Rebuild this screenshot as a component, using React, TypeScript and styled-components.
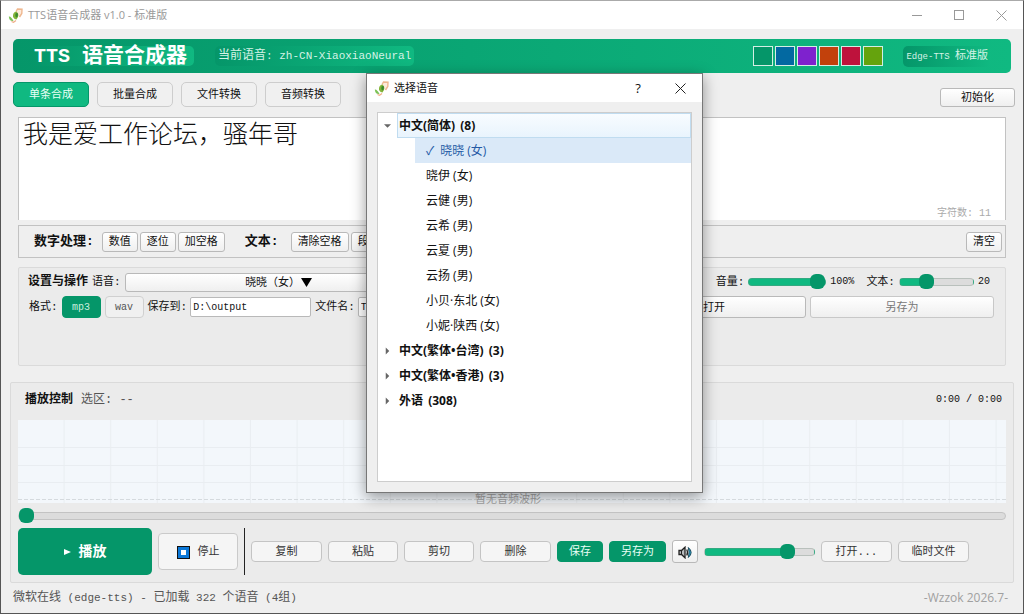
import React, { useState } from "react";
import styled, { createGlobalStyle, css } from "styled-components";

const ui = `"Liberation Mono", "Noto Sans CJK SC", monospace`;
const sans = `"Open Sans", "Noto Sans CJK SC", sans-serif`;
const green = "#059669";
const mint = "#10b981";

const GlobalStyle = createGlobalStyle`
  *, *::before, *::after { box-sizing: border-box; }
  body { margin: 0; background: #efefef; font-family: ${ui}; font-size: 11px; line-height: 16px; color: #111; }
  button, input, textarea { font: inherit; color: inherit; margin: 0; padding: 0; }
  button { padding-top: 1px; }
  ul { list-style: none; margin: 0; padding: 0; }
`;

const Window = styled.div`
  position: relative;
  display: flex;
  flex-direction: column;
  min-height: 100vh;
  overflow: hidden;
  background: #efefef;
  border: 1px solid #555;
  border-top-color: #aaa;
`;

const TitleBar = styled.header`
  display: flex;
  align-items: center;
  gap: 5px;
  height: 28px;
  padding-left: 7px;
  background: #fff;
  color: #999;
  font-family: ${sans};
`;

const TitleText = styled.span`
  flex: 1;
`;

const CaptionGroup = styled.div`
  display: flex;
  padding-right: 1px;
`;

const CaptionButton = styled.button`
  display: grid;
  place-items: center;
  width: 42px;
  height: 28px;
  padding: 0;
  border: 0;
  background: none;
  font-size: 13px;
`;

const Banner = styled.section`
  display: flex;
  align-items: center;
  height: 34px;
  margin: 10px 12px 0;
  padding: 0 20px 0 16px;
  border-radius: 5px;
  background: linear-gradient(90deg, ${green}, ${mint});
  color: #fff;
`;

const BannerLabel = styled.span`
  padding: 1px 3px 0;
  border-radius: 5px;
  background: linear-gradient(90deg, ${green}, ${mint});
  font-size: 12px;
  line-height: 19px;
  color: #d5f3e6;
  white-space: nowrap;
`;

const BannerTitle = styled.h1`
  margin: 0 21px 0 0;
  padding: 2px 7px 0 5px;
  border-radius: 5px;
  background: linear-gradient(90deg, ${green}, ${mint});
  font-size: 21px;
  line-height: 18px;
  font-weight: 700;
  white-space: nowrap;
`;

const Latin = styled.span<{ $size?: number }>`
  font-size: ${(p) => p.$size ?? 10}px;
`;

const Swatches = styled.div`
  display: flex;
  gap: 2px;
  margin: 0 20px 0 auto;
`;

const Swatch = styled.button<{ $color: string }>`
  width: 20px;
  height: 20px;
  border: 1px solid #d4eee4;
  background: ${(p) => p.$color};
`;

const TabRow = styled.nav`
  display: flex;
  align-items: flex-end;
  gap: 8px;
  margin: 9px 8px 0 12px;
`;

const Tab = styled.button<{ $active?: boolean }>`
  width: 76px;
  height: 25px;
  border: 1px solid ${(p) => (p.$active ? green : "#cdcdcd")};
  border-radius: 5px;
  background: ${(p) => (p.$active ? mint : "#f0f0f0")};
  color: ${(p) => (p.$active ? "#e9fff6" : "#111")};
`;

const raised = css`
  border: 1px solid #b9b9b9;
  border-radius: 3px;
  background: linear-gradient(#fff, #efefef);
`;

const PushButton = styled.button`
  ${raised}
  height: 20px;
  padding: 1px 6px 0;
  line-height: 16px;
  white-space: nowrap;
  &:disabled { color: #777; border-color: #c8c8c8; }
`;

const InitButton = styled(PushButton)`
  height: 19px;
  width: 75px;
  margin-left: auto;
`;

const Editor = styled.section`
  display: flex;
  flex: 1;
  flex-direction: column;
  min-height: 103px;
  margin: 10px 17px 0;
  border: 1px solid #c2c2c2;
  border-bottom: 0;
  background: #fff;
`;

const TextArea = styled.textarea`
  flex: 1;
  width: 100%;
  padding: 2px 4px;
  border: 0;
  outline: 0;
  resize: none;
  background: transparent;
  font-size: 25px;
  font-weight: 300;
  line-height: 34px;
`;

const Counter = styled.div`
  padding-right: 14px;
  text-align: right;
  font-size: 10px;
  line-height: 12px;
  color: #aaa;
`;

const ToolStrip = styled.section`
  display: flex;
  align-items: center;
  gap: 2px;
  height: 33px;
  margin: 5px 17px 0;
  padding: 0 3px 0 15px;
  border: 1px solid #c2c2c2;
`;

const StripLabel = styled.strong<{ $lead?: number; $trail: number }>`
  margin: 0 ${(p) => p.$trail}px 0 ${(p) => p.$lead ?? 0}px;
  font-size: 13px;
`;

const Spacer = styled.span`
  flex: 1;
`;

const Settings = styled.section`
  display: flex;
  flex-direction: column;
  gap: 5px;
  height: 99px;
  margin: 9px 17px 0;
  padding: 4px 11px 0 9px;
  border: 1px solid #dadada;
  border-radius: 2px;
  background: #ebebeb;
`;

const SettingsRow = styled.div<{ $end?: number }>`
  display: flex;
  align-items: center;
  gap: 4px;
  height: 20px;
  padding-right: ${(p) => p.$end ?? 0}px;
  white-space: nowrap;
`;

const SectionTitle = styled.h2`
  margin: 0;
  font-size: 12px;
  font-weight: 700;
`;

const VoiceButton = styled(PushButton)`
  display: flex;
  align-items: center;
  justify-content: center;
  gap: 1px;
  width: 308px;
  height: 19px;
`;

const FieldLabel = styled.label<{ $lead?: number }>`
  display: flex;
  align-items: center;
  gap: 3px;
  margin-left: ${(p) => p.$lead ?? 0}px;
`;

const FormatButton = styled.button<{ $active?: boolean }>`
  width: 39px;
  height: 22px;
  border: 1px solid ${(p) => (p.$active ? green : "#d0d0d0")};
  border-radius: 4px;
  background: ${(p) => (p.$active ? green : "#f0f0f0")};
  color: ${(p) => (p.$active ? "#c9efdf" : "#555")};
  font-size: 10px;
`;

const TextInput = styled.input<{ $width?: number }>`
  width: ${(p) => (p.$width ? `${p.$width}px` : "100%")};
  height: 20px;
  padding: 0 2px;
  border: 1px solid #b9b9b9;
  border-radius: 2px;
  background: #fff;
  font-size: 10px;
`;

const GrowLabel = styled(FieldLabel)`
  flex: 1;
`;

const WideButton = styled(PushButton)`
  flex: 0 1 184px;
  height: 22px;
`;

const Range = styled.input<{ $fill: number; $width?: number; $plain?: boolean }>`
  appearance: none;
  display: block;
  width: ${(p) => (p.$width ? `${p.$width}px` : "100%")};
  height: 15px;
  background: transparent;
  &::-webkit-slider-runnable-track {
    height: 8px;
    border: 1px solid ${(p) => (p.$plain ? "#c3c3c3" : "rgba(120, 140, 130, 0.35)")};
    border-radius: 4px;
    background: linear-gradient(90deg, ${mint} ${(p) => p.$fill}%, #dcdcdc ${(p) => p.$fill}%);
  }
  &::-webkit-slider-thumb {
    appearance: none;
    width: 15px;
    height: 15px;
    margin-top: -5px;
    border-radius: 6px;
    background: ${green};
  }
`;

const Player = styled.section`
  height: 201px;
  margin: 16px 9px 0;
  padding: 0 7px;
  border: 1px solid #dadada;
  border-radius: 2px;
  background: #ebebeb;
`;

const PlayerHead = styled.div`
  display: flex;
  align-items: center;
  gap: 8px;
  height: 37px;
  padding: 0 4px 3px 7px;
`;

const Selection = styled.span`
  flex: 1;
  font-size: 12px;
  color: #555;
`;

const Wave = styled.div`
  position: relative;
  display: flex;
  align-items: flex-end;
  justify-content: center;
  height: 83px;
  padding-right: 8px;
  background: #f3f7fb;
  color: #a6a6a6;
  line-height: 6px;
`;

const WaveGrid = styled.svg`
  position: absolute;
  inset: 0;
  width: 100%;
  height: 100%;
`;

const WaveText = styled.span`
  position: relative;
`;

const Seek = styled.div`
  margin: 5px 0;
`;

const Controls = styled.div`
  display: flex;
  align-items: center;
  gap: 6px;
  height: 47px;
`;

const PlayButton = styled.button`
  display: flex;
  align-items: center;
  justify-content: center;
  gap: 8px;
  width: 134px;
  height: 47px;
  border: 0;
  border-radius: 5px;
  background: ${green};
  color: #fff;
  font-size: 14px;
  font-weight: 700;
`;

const StopButton = styled.button`
  display: flex;
  align-items: center;
  justify-content: center;
  gap: 8px;
  width: 80px;
  height: 37px;
  border: 1px solid #cacaca;
  border-radius: 4px;
  background: #f5f5f5;
  color: #333;
`;

const Divider = styled.span`
  width: 1px;
  height: 47px;
  background: #222;
`;

const ActionButton = styled.button<{ $primary?: boolean; $width?: number }>`
  width: ${(p) => p.$width ?? 70}px;
  height: 21px;
  border: 1px solid ${(p) => (p.$primary ? green : "#c4c4c4")};
  border-radius: 4px;
  background: ${(p) => (p.$primary ? green : "#f5f5f5")};
  color: ${(p) => (p.$primary ? "#e9fff6" : "#333")};
  line-height: 16px;
`;

const MuteButton = styled.button`
  ${raised}
  display: grid;
  place-items: center;
  width: 26px;
  height: 23px;
`;

const StatusBar = styled.footer`
  display: flex;
  align-items: center;
  justify-content: space-between;
  height: 30px;
  padding: 0 15px 0 12px;
  font-size: 12px;
  color: #555;
`;

const Signature = styled.span`
  font-family: ${sans};
  color: #a0a0a0;
`;

const Dialog = styled.div`
  position: absolute;
  top: 72px;
  left: 365px;
  display: flex;
  flex-direction: column;
  width: 337px;
  height: 420px;
  border: 1px solid #777;
  background: #efefef;
  box-shadow: 0 4px 14px rgba(0, 0, 0, 0.4);
  font-family: ${sans};
`;

const DialogBar = styled(TitleBar)`
  color: #111;
`;

const Tree = styled.ul`
  flex: 1;
  margin: 10px;
  border: 1px solid #cdcdcd;
  background: #fff;
  font-size: 12px;
  color: #111;
`;

const GroupRow = styled.div`
  display: flex;
  align-items: center;
  height: 25px;
  padding-left: 6px;
`;

const Arrow = styled.svg`
  width: 7px;
  height: 8px;
  margin-right: 6px;
  fill: #666;
`;

const GroupName = styled.span<{ $current?: boolean }>`
  flex: 1;
  padding: 1px 0 0 1px;
  border: 1px solid ${(p) => (p.$current ? "#c0dcf0" : "transparent")};
  background: ${(p) => (p.$current ? "linear-gradient(#f8fcff, #e9f4fd)" : "none")};
  font-weight: 700;
  line-height: 22px;
`;

const Count = styled.span`
  margin-left: 2px;
`;

const Voice = styled.li<{ $selected?: boolean }>`
  display: flex;
  gap: 6px;
  margin-left: 37px;
  padding: 1px 0 0 11px;
  line-height: 24px;
  background: ${(p) => (p.$selected ? "#dae9f8" : "none")};
  color: ${(p) => (p.$selected ? "#2459a5" : "inherit")};
`;

const AppIcon = () => (
  <svg width="15" height="15" viewBox="0 0 15 15" aria-hidden="true">
    <path d="M8 3.500 L9.500 1 L14 1.200 L13.800 5.500 L11.500 9" fill="#fdeadb" stroke="#efb78f" strokeWidth="1.400" />
    <path d="M.8 8.500 Q3 8 5.500 13 Q1.200 13.500 .8 8.500Z" fill="#7cc257" />
    <path d="M5 9 Q4.500 4 8.500 3.500 Q12.300 7 8.500 11.500 Q6.500 11.500 5 9Z" fill="#86b53c" />
    <path d="M7.500 5.500 Q9.800 4.200 10 6.500 Q10 9 8.200 9.500 Q6.800 8 7.500 5.500Z" fill="#3b8a2e" />
    <path d="M3.500 13.500 L5.500 14.300 L8 12.500" fill="none" stroke="#efb08a" strokeWidth="1.300" />
  </svg>
);

const Cross = ({ color }: { color: string }) => (
  <svg width="11" height="11" viewBox="0 0 11 11" stroke={color} fill="none" aria-hidden="true">
    <path d="M.5 .5 L10.500 10.500 M10.500 .5 L.5 10.500" />
  </svg>
);

const SpeakerIcon = () => (
  <svg width="15" height="13" viewBox="0 0 15 13" aria-hidden="true">
    <path d="M1 4.500 H3.500 L7 1.200 V11.800 L3.500 8.500 H1Z" fill="#b9bcbe" stroke="#222" strokeWidth="1.300" />
    <path d="M3.500 4.500 V8.500" stroke="#222" />
    <path d="M8.800 3.500 Q10.400 6.500 8.800 9.500" fill="none" stroke="#222" strokeWidth="1.400" />
    <path d="M10.300 1.500 Q16 6.500 10.300 11.500 Q12 6.500 10.300 1.500Z" fill="#2b9fc4" stroke="#1c4d60" />
  </svg>
);

const Captions = () => (
  <CaptionGroup>
    <CaptionButton aria-label="最小化">
      <svg width="10" height="10" viewBox="0 0 10 10" stroke="#999"><path d="M0 5.500 H10" /></svg>
    </CaptionButton>
    <CaptionButton aria-label="最大化">
      <svg width="10" height="10" viewBox="0 0 10 10" stroke="#999" fill="none"><rect x=".5" y=".5" width="9" height="9" /></svg>
    </CaptionButton>
    <CaptionButton aria-label="关闭"><Cross color="#999" /></CaptionButton>
  </CaptionGroup>
);

const themes = [
  ["翠绿", green],
  ["蓝色", "#0369a1"],
  ["紫色", "#7e22ce"],
  ["橙色", "#c2410c"],
  ["红色", "#be123c"],
  ["黄绿", "#65a30d"],
];
const tabs = ["单条合成", "批量合成", "文件转换", "音频转换"];
const voices = ["晓晓 (女)", "晓伊 (女)", "云健 (男)", "云希 (男)", "云夏 (男)", "云扬 (男)", "小贝·东北 (女)", "小妮·陕西 (女)"];
const groups: [string, number][] = [["中文(繁体•台湾)", 3], ["中文(繁体•香港)", 3], ["外语", 308]];

type SliderProps = { id?: string; label?: string; start: number; max?: number; width?: number; plain?: boolean };

const Slider = ({ id, label, start, max = 100, width, plain }: SliderProps) => {
  const [value, setValue] = useState(start);
  return (
    <Range
      id={id}
      type="range"
      aria-label={label}
      max={max}
      value={value}
      onChange={(e) => setValue(Number(e.target.value))}
      $fill={plain ? 0 : (value / max) * 100}
      $width={width}
      $plain={plain}
    />
  );
};

export default function App() {
  const [tab, setTab] = useState(0);
  const [format, setFormat] = useState("mp3");
  const [selected, setSelected] = useState(0);
  const [text, setText] = useState("我是爱工作论坛，骚年哥");

  return (
    <>
      <GlobalStyle />
      <Window>
        <TitleBar>
          <AppIcon />
          <TitleText>TTS语音合成器 v1.0 - 标准版</TitleText>
          <Captions />
        </TitleBar>

        <Banner>
          <BannerTitle>
            <Latin $size={20}>TTS </Latin>语音合成器
          </BannerTitle>
          <BannerLabel>
            当前语音<Latin $size={11}>: zh-CN-XiaoxiaoNeural</Latin>
          </BannerLabel>
          <Swatches>
            {themes.map(([name, color]) => (
              <Swatch key={name} $color={color} aria-label={name} />
            ))}
          </Swatches>
          <BannerLabel>
            <Latin $size={9}>Edge-TTS </Latin>
            <Latin $size={11}>标准版</Latin>
          </BannerLabel>
        </Banner>

        <TabRow>
          {tabs.map((name, i) => (
            <Tab key={name} $active={i === tab} onClick={() => setTab(i)}>{name}</Tab>
          ))}
          <InitButton>初始化</InitButton>
        </TabRow>

        <Editor>
          <TextArea aria-label="合成文本" value={text} onChange={(e) => setText(e.target.value)} />
          <Counter>字符数: {text.length}</Counter>
        </Editor>

        <ToolStrip>
          <StripLabel $trail={6}>数字处理:</StripLabel>
          <PushButton>数值</PushButton>
          <PushButton>逐位</PushButton>
          <PushButton>加空格</PushButton>
          <StripLabel $lead={18} $trail={10}>文本:</StripLabel>
          <PushButton>清除空格</PushButton>
          <PushButton>段落</PushButton>
          <Spacer />
          <PushButton>清空</PushButton>
        </ToolStrip>

        <Settings>
          <SettingsRow $end={4}>
            <SectionTitle>设置与操作</SectionTitle>
            <FieldLabel htmlFor="voice">语音:</FieldLabel>
            <VoiceButton id="voice" aria-haspopup="dialog">
              晓晓（女）
              <svg width="11" height="9" viewBox="0 0 11 9" aria-hidden="true"><path d="M0 0 H11 L5.500 9Z" /></svg>
            </VoiceButton>
            <Spacer />
            <FieldLabel htmlFor="volume">音量:</FieldLabel>
            <Slider id="volume" start={100} width={78} />
            <Latin>100%</Latin>
            <FieldLabel htmlFor="size" $lead={8}>文本:</FieldLabel>
            <Slider id="size" start={20} max={60} width={75} />
            <Latin>20</Latin>
          </SettingsRow>
          <SettingsRow>
            <FieldLabel as="span" $lead={1}>格式:</FieldLabel>
            <FormatButton $active={format === "mp3"} onClick={() => setFormat("mp3")}>mp3</FormatButton>
            <FormatButton $active={format === "wav"} onClick={() => setFormat("wav")}>wav</FormatButton>
            <FieldLabel>
              保存到:
              <TextInput $width={121} defaultValue="D:\output" />
            </FieldLabel>
            <GrowLabel>
              文件名:
              <TextInput defaultValue="TTS" />
            </GrowLabel>
            <WideButton>打开</WideButton>
            <WideButton disabled>另存为</WideButton>
          </SettingsRow>
        </Settings>

        <Player>
          <PlayerHead>
            <SectionTitle>播放控制</SectionTitle>
            <Selection>选区: --</Selection>
            <Latin>0:00 / 0:00</Latin>
          </PlayerHead>
          <Wave>
            <WaveGrid aria-hidden="true">
              <defs>
                <pattern id="columns" width="46.600" height="83" patternUnits="userSpaceOnUse">
                  <path d="M46 0 V83" stroke="#e9edf1" />
                </pattern>
              </defs>
              <rect width="100%" height="100%" fill="url(#columns)" />
              {[27, 45, 62].map((y) => (
                <rect key={y} y={y} width="100%" height="1" fill="#e9edf1" />
              ))}
              <line x1="0" x2="100%" y1="79.500" y2="79.500" stroke="#d5dade" strokeDasharray="4 2" />
            </WaveGrid>
            <WaveText>暂无音频波形</WaveText>
          </Wave>
          <Seek>
            <Slider label="播放进度" start={0} plain />
          </Seek>
          <Controls>
            <PlayButton>
              <svg width="7" height="6" viewBox="0 0 7 6" fill="#fff" aria-hidden="true"><path d="M0 0 L7 3 L0 6Z" /></svg>
              播放
            </PlayButton>
            <StopButton>
              <svg width="13" height="13" viewBox="0 0 13 13" aria-hidden="true">
                <rect x=".5" y=".5" width="12" height="12" fill="#0b78d8" stroke="#111" />
                <rect x="4" y="4" width="5" height="5" fill="#fff" />
              </svg>
              停止
            </StopButton>
            <Divider />
            <ActionButton $width={71}>复制</ActionButton>
            <ActionButton>粘贴</ActionButton>
            <ActionButton>剪切</ActionButton>
            <ActionButton $width={71}>删除</ActionButton>
            <ActionButton $primary $width={46}>保存</ActionButton>
            <ActionButton $primary $width={57}>另存为</ActionButton>
            <MuteButton aria-label="静音"><SpeakerIcon /></MuteButton>
            <Slider label="播放音量" start={80} width={111} />
            <ActionButton $width={71}>打开...</ActionButton>
            <ActionButton $width={71}>临时文件</ActionButton>
          </Controls>
        </Player>

        <StatusBar>
          <span>
            微软在线<Latin $size={11}> (edge-tts) - </Latin>已加载<Latin $size={11}> 322 </Latin>个语音
            <Latin $size={11}> (4</Latin>组<Latin $size={11}>)</Latin>
          </span>
          <Signature>-Wzzok 2026.7-</Signature>
        </StatusBar>

        <Dialog role="dialog" aria-label="选择语音">
          <DialogBar>
            <AppIcon />
            <TitleText>选择语音</TitleText>
            <CaptionGroup>
              <CaptionButton aria-label="帮助">?</CaptionButton>
              <CaptionButton aria-label="关闭"><Cross color="#222" /></CaptionButton>
            </CaptionGroup>
          </DialogBar>
          <Tree role="tree">
            <li role="treeitem" aria-expanded="true">
              <GroupRow>
                <Arrow viewBox="0 0 8 8"><path d="M0 2 H8 L4 6Z" /></Arrow>
                <GroupName $current>中文(简体) <Count>(8)</Count></GroupName>
              </GroupRow>
              <ul role="group">
                {voices.map((name, i) => (
                  <Voice key={name} role="treeitem" $selected={i === selected} onClick={() => setSelected(i)}>
                    {i === selected && <span>✓</span>}
                    {name}
                  </Voice>
                ))}
              </ul>
            </li>
            {groups.map(([name, count]) => (
              <li key={name} role="treeitem" aria-expanded="false">
                <GroupRow>
                  <Arrow viewBox="0 0 8 8"><path d="M2 0 L6 4 L2 8Z" /></Arrow>
                  <GroupName>{name} <Count>({count})</Count></GroupName>
                </GroupRow>
              </li>
            ))}
          </Tree>
        </Dialog>
      </Window>
    </>
  );
}
